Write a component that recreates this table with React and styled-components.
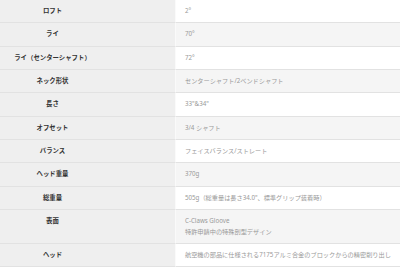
import React from 'react';
import styled, { createGlobalStyle } from 'styled-components';

const GlobalStyle = createGlobalStyle`
  html, body {
    margin: 0;
    padding: 0;
    background: #ffffff;
  }
  body {
    font-family: "Noto Sans CJK JP", "Noto Sans", sans-serif;
    overflow: hidden;
  }
`;

const SpecTable = styled.div`
  display: grid;
  grid-template-columns: 246px 1fr;
  margin-left: -70px;
`;

const Label = styled.div`
  background: #efefef;
  color: #333333;
  font-size: 6.4px;
  font-weight: 700;
  line-height: 10.67px;
  text-align: center;
  padding: 6px 8px 5.67px;
  border-bottom: 1px solid #e2e2e2;
  border-right: 1px solid #fafafa;
`;

const Value = styled.div`
  background: ${({ $shaded }) => ($shaded ? '#f5f5f5' : '#ffffff')};
  color: #999999;
  font-family: "Noto Sans", "Noto Sans CJK JP", sans-serif;
  font-size: 6.2px;
  line-height: 10.67px;
  padding: 6px 8px 5.67px 9px;
  border-bottom: 1px solid #e2e2e2;
`;

const specs = [
  ['ロフト', ['2°']],
  ['ライ', ['70°']],
  ['ライ（センターシャフト）', ['72°']],
  ['ネック形状', ['センターシャフト/2ベンドシャフト']],
  ['長さ', ['33"&34"']],
  ['オフセット', ['3/4 シャフト']],
  ['バランス', ['フェイスバランス/ストレート']],
  ['ヘッド重量', ['370g']],
  ['総重量', ['505g（総重量は長さ34.0"、標準グリップ装着時）']],
  ['表面', ['C-Claws Gloove', '特許申請中の特殊剖型デザイン']],
  ['ヘッド', ['航空機の部品に仕様される7175アルミ合金のブロックからの精密削り出し']],
];

export default function App() {
  return (
    <>
      <GlobalStyle />
      <SpecTable>
        {specs.map(([label, lines], i) => (
          <React.Fragment key={label}>
            <Label>{label}</Label>
            <Value $shaded={i % 2 === 1}>
              {lines.map((line) => (
                <div key={line}>{line}</div>
              ))}
            </Value>
          </React.Fragment>
        ))}
      </SpecTable>
    </>
  );
}
